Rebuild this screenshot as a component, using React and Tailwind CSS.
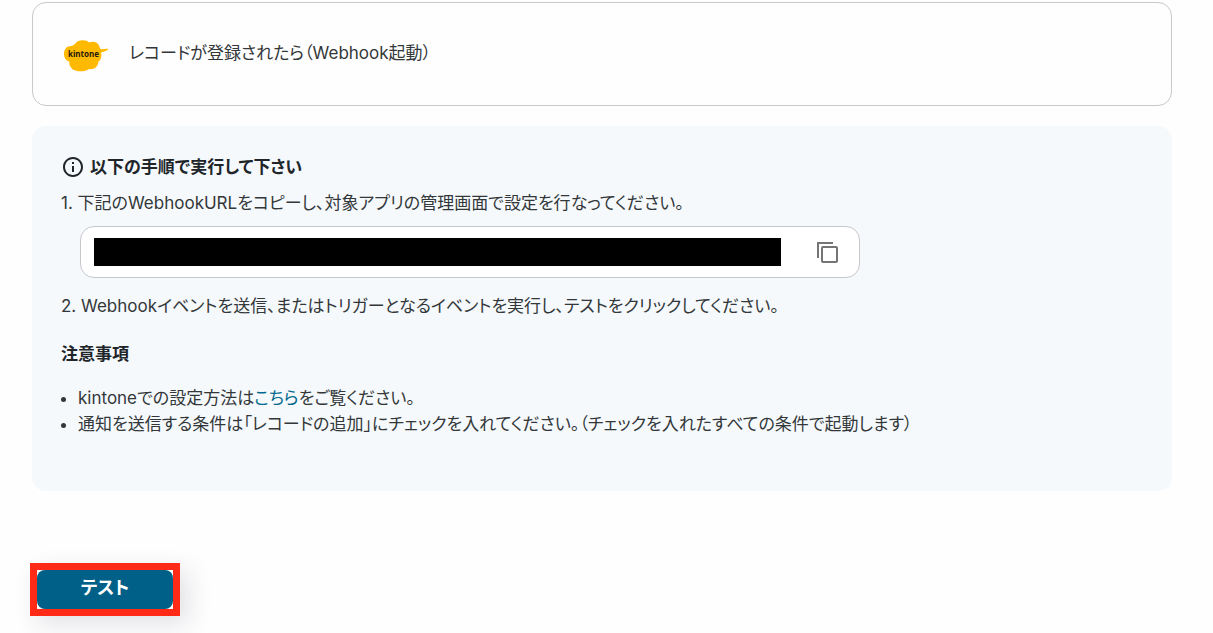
import React from 'react';

const WEBHOOK_URL = '';

function KintoneLogo() {
    return (
        <svg viewBox="0 0 46 34" className="mt-1 h-[34px] w-[46px] shrink-0" role="img" aria-label="kintone">
            <path
                fill="#ffb900"
                d="M1 15C1 10 4 6.500 9 7C10.500 6 11.500 5.500 12.500 4.500C14 .5 24 0 26 3.500C30 2 35.500 3 36.500 8L37.500 10C39 11 43 9 45.500 10.300C43 12.500 40 13 38 13.500C39 17 38 21 35.500 22.500C35 28 31 31 26 30C22 33.500 11 33 8.500 29C6.500 27 6 25 6.500 22.500C3.500 22 1 19.500 1 15Z"
            />
            <text x="20.5" y="18" textAnchor="middle" fill="#1f1a0a" fontSize="8" fontWeight="700" fontFamily="Noto Sans, sans-serif">
                kintone
            </text>
        </svg>
    );
}

function InfoIcon() {
    return (
        <svg viewBox="0 0 24 24" className="size-6 shrink-0" fill="#20252a" aria-hidden="true">
            <path d="M11 7h2v2h-2zm0 4h2v6h-2zm1-9C6.480 2 2 6.480 2 12s4.480 10 10 10 10-4.480 10-10S17.520 2 12 2zm0 18c-4.410 0-8-3.590-8-8s3.590-8 8-8 8 3.590 8 8-3.590 8-8 8z" />
        </svg>
    );
}

function CopyIcon() {
    return (
        <svg viewBox="0 0 24 24" className="size-6" fill="none" stroke="#757575" strokeWidth="2" aria-hidden="true">
            <path d="M3 18V3H18" />
            <rect x="7" y="7" width="15" height="15" rx="1" />
        </svg>
    );
}

export default function App() {
    return (
        <main
            lang="ja"
            className="flex min-h-screen flex-col bg-[#fefefe] pt-0.5 pr-[41px] pb-4 pl-8 font-['Inter','Noto_Sans_CJK_JP',sans-serif] text-[17px] leading-[26px] text-[#333739] [font-feature-settings:'palt']"
        >
            <section className="flex h-[104px] items-center gap-5 rounded-[14px] border border-[#c9c9cb] px-[30px]">
                <KintoneLogo />
                <p className="pb-0.5">レコードが登録されたら（Webhook起動）</p>
            </section>

            <section className="mt-5 rounded-[14px] bg-[#f5f9fc] px-[29px] pt-7 pb-[54px]">
                <h2 className="flex items-center gap-[5px] font-bold text-[#20252a]">
                    <InfoIcon />
                    以下の手順で実行して下さい
                </h2>
                <p className="mt-2.5">1. 下記のWebhookURLをコピーし、対象アプリの管理画面で設定を行なってください。</p>

                <div className="mt-2.5 ml-[19px] flex h-[52px] max-w-[780px] items-center justify-between rounded-[14px] border border-[#c8c8cc] bg-white pr-5 pl-[13px]">
                    <input
                        type="text"
                        readOnly
                        aria-label="WebhookURL"
                        value={WEBHOOK_URL}
                        className="mr-[34px] h-7 min-w-0 flex-1 bg-black text-black outline-none"
                    />
                    <button type="button" aria-label="コピー">
                        <CopyIcon />
                    </button>
                </div>

                <p className="mt-[15px]">2. Webhookイベントを送信、またはトリガーとなるイベントを実行し、テストをクリックしてください。</p>

                <h3 className="mt-[22px] font-bold text-[#20252a]">注意事項</h3>
                <ul className="mt-[18px] list-disc pl-[17px]">
                    <li>
                        kintoneでの設定方法は
                        <a href="#kintone" className="text-[#006a8e]">こちら</a>
                        をご覧ください。
                    </li>
                    <li>通知を送信する条件は「レコードの追加」にチェックを入れてください。（チェックを入れたすべての条件で起動します）</li>
                </ul>
            </section>

            <div className="mt-[72px] -ml-0.5 self-start border-[7px] border-[#ff2b16] bg-white shadow-[8px_8px_24px_rgba(60,40,80,0.14)]">
                <button type="button" className="block h-[39px] w-[136px] rounded-lg bg-[#006087] pb-1 text-lg font-bold text-white">
                    テスト
                </button>
            </div>
        </main>
    );
}
